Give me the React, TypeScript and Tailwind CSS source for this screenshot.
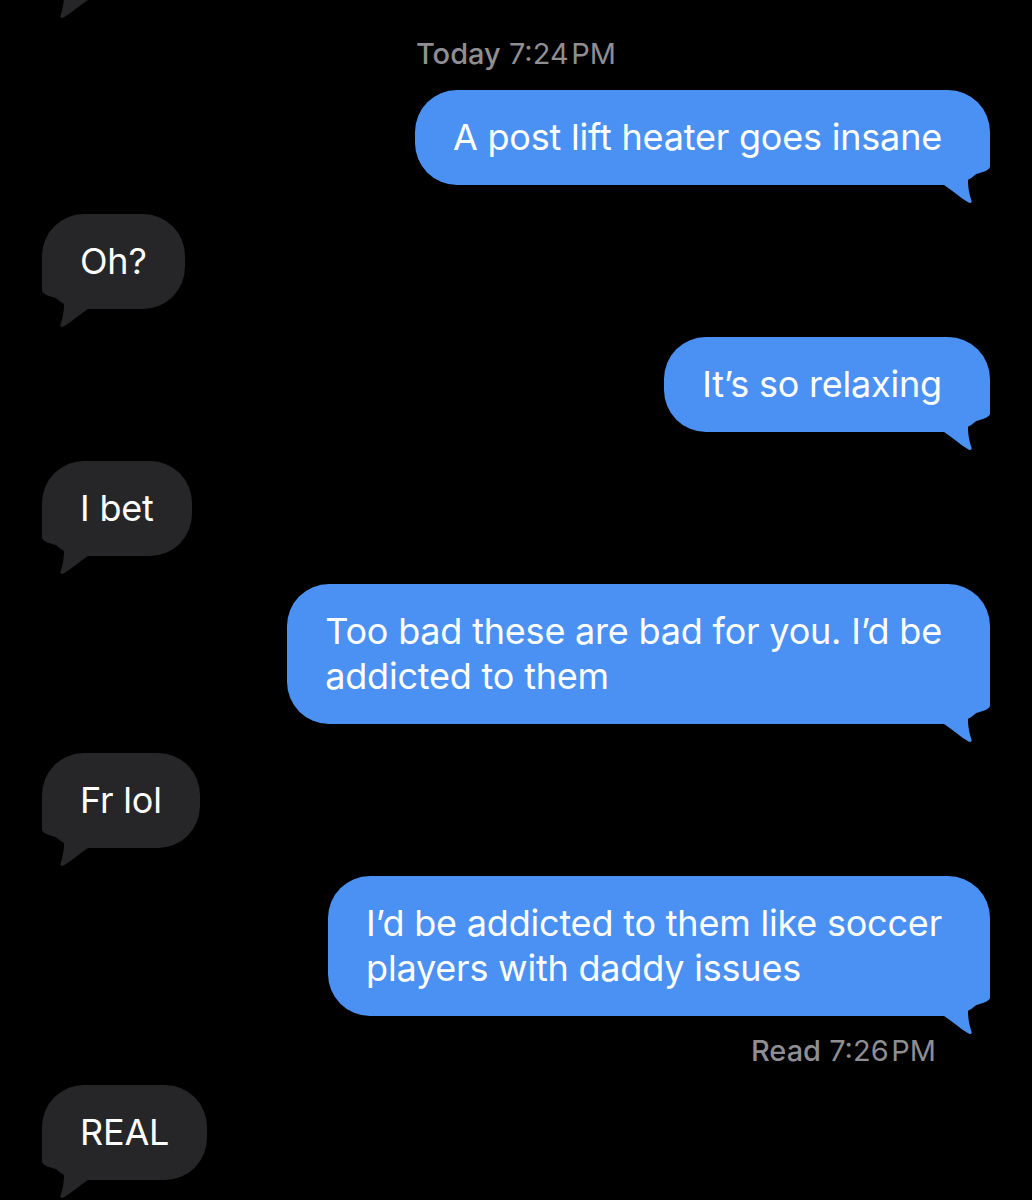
import type { ReactNode } from "react";

type Msg =
  | { kind: "in"; text: string }
  | { kind: "out"; lines: string[] };

const messages: Msg[] = [
  { kind: "out", lines: ["A post lift heater goes insane"] },
  { kind: "in", text: "Oh?" },
  { kind: "out", lines: ["It\u2019s so relaxing"] },
  { kind: "in", text: "I bet" },
  { kind: "out", lines: ["Too bad these are bad for you. I\u2019d be", "addicted to them"] },
  { kind: "in", text: "Fr lol" },
  { kind: "out", lines: ["I\u2019d be addicted to them like soccer", "players with daddy issues"] },
];

function Tail({ color, side }: { color: string; side: "left" | "right" }) {
  return (
    <svg
      width="50"
      height="65"
      viewBox="0 0 50 65"
      className={
        side === "right"
          ? "absolute right-0 bottom-[-19px]"
          : "absolute left-0 bottom-[-19px] -scale-x-100"
      }
    >
      <path
        d="M0 0 H50 V27 C50 35 28 33 28 42 C28 50 30 57 31.5 61.5 C32.2 63.8 30.2 64.6 28.5 63.6 C20 58.5 12 51 4 46 L0 46 Z"
        fill={color}
      />
    </svg>
  );
}

function Outgoing({ lines }: { lines: string[] }) {
  return (
    <div className="flex justify-end pr-[42px]">
      <div className="relative rounded-[42px] bg-[#4b91f3] pl-[38px] pr-[48px] py-[25px] text-[36px] leading-[45px] tracking-[-0.2px] text-white">
        <Tail color="#4b91f3" side="right" />
        <div className="relative">
          {lines.map((l) => (
            <div key={l}>{l}</div>
          ))}
        </div>
      </div>
    </div>
  );
}

function Incoming({ children, className = "" }: { children: ReactNode; className?: string }) {
  return (
    <div className={"flex justify-start pl-[42px] " + className}>
      <div className="relative rounded-[42px] bg-[#262628] px-[38px] py-[25px] text-[36px] leading-[45px] tracking-[-0.2px] text-white">
        <Tail color="#262628" side="left" />
        <div className="relative">{children}</div>
      </div>
    </div>
  );
}

export default function App() {
  return (
    <div
      className="relative w-[1032px] h-[1200px] overflow-hidden bg-black"
      style={{ fontFamily: "Inter, 'Noto Sans', sans-serif" }}
    >
      {/* previous message, scrolled off the top */}
      <div className="mt-[-95px]">
        <Incoming>
          <span className="inline-block w-[420px]">&nbsp;</span>
        </Incoming>
      </div>

      <div className="flex justify-center pt-[37px] text-[29px] leading-[34px] text-[#8e8e93]">
        <span>
          <span className="font-medium">Today</span> 7:24&#8202;PM
        </span>
      </div>

      <div className="mt-[19px] flex flex-col gap-[28.5px]">
        {messages.map((m, i) =>
          m.kind === "out" ? (
            <Outgoing key={i} lines={m.lines} />
          ) : (
            <Incoming key={i}>{m.text}</Incoming>
          )
        )}
      </div>

      <div className="flex justify-end pr-[96px] pt-[18px] text-[29px] leading-[34px] text-[#8e8e93]">
        <span>
          <span className="font-medium">Read</span> 7:26&#8202;PM
        </span>
      </div>

      <Incoming className="mt-[17px]">REAL</Incoming>
    </div>
  );
}
